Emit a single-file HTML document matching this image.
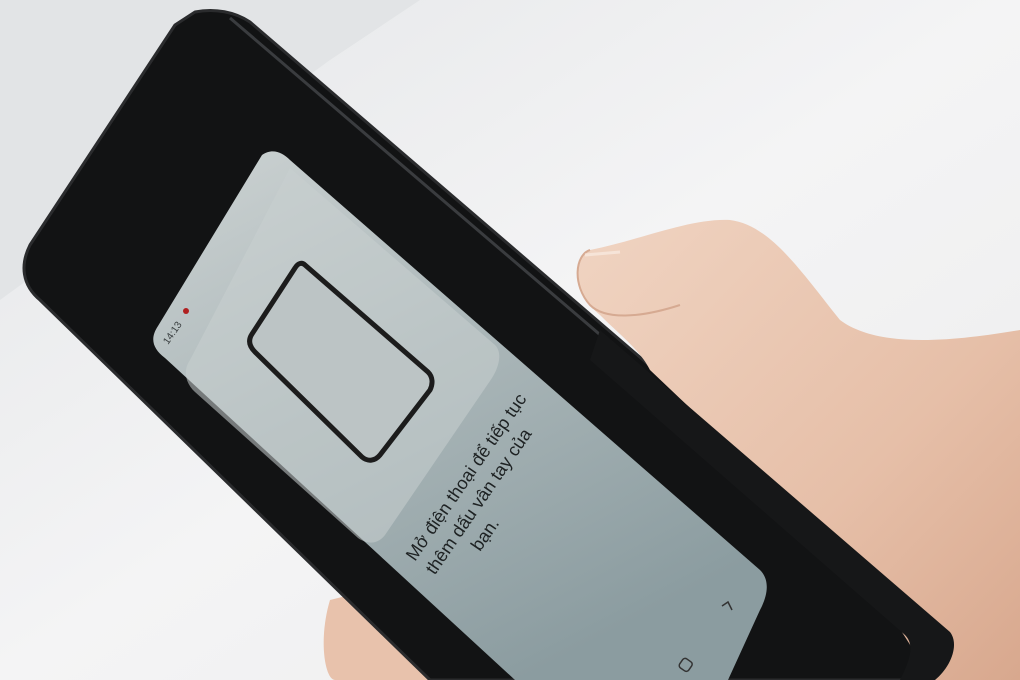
<!DOCTYPE html>
<html><head><meta charset="utf-8"><style>
html,body{margin:0;padding:0;width:1020px;height:680px;overflow:hidden;background:#eeeff0}
svg{display:block}
</style></head><body>
<svg width="1020" height="680" viewBox="0 0 1020 680" xmlns="http://www.w3.org/2000/svg">
<defs>
<linearGradient id="bg" x1="0" y1="0" x2="1" y2="1">
<stop offset="0" stop-color="#e4e6e8"/><stop offset="0.5" stop-color="#f4f4f5"/><stop offset="1" stop-color="#ececec"/></linearGradient>
<linearGradient id="scr" x1="0" y1="0" x2="0.6" y2="1">
<stop offset="0" stop-color="#cdd3d3"/><stop offset="0.5" stop-color="#aab6b8"/><stop offset="1" stop-color="#8b9ca0"/></linearGradient>
<linearGradient id="skin" x1="0" y1="0" x2="1" y2="1">
<stop offset="0" stop-color="#f0d4c2"/><stop offset="0.6" stop-color="#e6bfa8"/><stop offset="1" stop-color="#d8a88e"/></linearGradient>
</defs>
<rect width="1020" height="680" fill="url(#bg)"/>
<polygon points="0,0 420,0 330,60 0,300" fill="#e2e4e6"/>
<!-- bottom-left thumb -->
<path d="M330,600 C318,640 325,680 335,680 L440,680 C430,650 400,610 370,590 Z" fill="#e8c2ac"/>
<!-- phone body -->
<path d="M195,12 C215,8 235,12 250,22 L955,628 C965,640 955,668 940,680 L430,680 L40,300 C22,285 20,265 30,245 L175,25 Z" fill="#121314" stroke="#2a2b2d" stroke-width="3" stroke-linejoin="round"/>
<path d="M230,18 L945,630" stroke="#3a3c3f" stroke-width="3"/>
<!-- screen -->
<path d="M262,155 C272,148 282,152 290,160 L760,570 C770,580 768,595 760,610 L728,680 L515,680 L165,358 C152,348 150,338 158,326 Z" fill="url(#scr)"/>
<!-- inner panel -->
<path d="M290,168 L495,345 C502,352 500,365 492,378 L385,535 C378,544 368,545 358,538 L195,392 C185,383 183,370 190,360 Z" fill="#c8cfd0" opacity="0.55"/>
<!-- phone icon -->
<path d="M305,265 L428,372 C433,377 433,384 430,390 L380,455 C375,461 368,462 362,457 L255,352 C249,346 248,340 252,334 L295,268 C298,263 302,262 305,265 Z" fill="#bcc4c5" stroke="#1c1c1c" stroke-width="5" stroke-linejoin="round"/>
<text x="0" y="0" transform="translate(415,562) rotate(-55.5)" font-family="'Liberation Sans','DejaVu Sans',sans-serif" font-size="18" fill="#1e2223">
<tspan x="0" dy="0">Mở điện thoại để tiếp tục</tspan>
<tspan x="0" dy="24">thêm dấu vân tay của</tspan>
<tspan x="45" dy="24">bạn.</tspan></text>
<text transform="translate(168,345) rotate(-55.5)" font-family="'Liberation Sans',sans-serif" font-size="10" fill="#3a3f40">14:13</text>
<circle cx="186" cy="311" r="3" fill="#b02020"/>
<path d="M722,606 L728,602 L732,610" stroke="#333" stroke-width="1.5" fill="none"/>
<rect x="680" y="660" width="11" height="11" rx="3" transform="rotate(-55 685 665)" stroke="#333" stroke-width="1.5" fill="none"/>
<!-- hand -->
<path d="M590,250 C640,240 690,218 730,220 C770,225 800,270 840,320 C880,350 960,340 1020,330 L1020,680 L930,680 C910,640 880,600 850,560 L650,370 C640,350 620,335 600,315 C575,295 570,260 590,250 Z" fill="url(#skin)"/>
<path d="M590,250 C575,255 572,285 590,305 C605,320 640,318 680,305" fill="none" stroke="#d6aa92" stroke-width="2"/>
<path d="M585,255 L620,252" stroke="#f6e4d8" stroke-width="3"/>
<!-- phone edge over hand -->
<path d="M600,330 L950,632 C960,645 950,668 935,680 L900,680 C910,660 915,645 905,635 L590,360 Z" fill="#161718"/>
</svg>
</body></html>
